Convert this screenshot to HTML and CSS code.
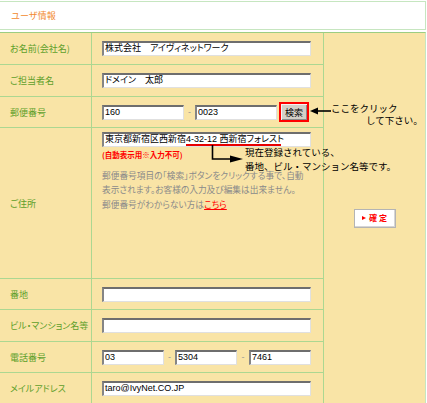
FILE: index.html
```html
<!DOCTYPE html>
<html lang="ja">
<head>
<meta charset="utf-8">
<title>ユーザ情報</title>
<link rel="stylesheet" href="styles.css">
</head>
<body>
<div class="page">
  <div class="head">ユーザ情報</div>
  <div class="form">
    <div class="lbl">お名前(会社名)</div>
    <div class="fld"><span class="inp w209">株式会社　アイヴィネットワーク</span></div>

    <div class="side"><span class="kakutei"><span class="tri"></span>確 定</span></div>

    <div class="lbl">ご担当者名</div>
    <div class="fld"><span class="inp w209">ドメイン　太郎</span></div>

    <div class="lbl">郵便番号</div>
    <div class="fld">
      <span class="inp w82">160</span><span class="dash">-</span><span class="inp w82">0023</span><span class="btn">検索</span>
    </div>

    <div class="lbl">ご住所</div>
    <div class="fld addr">
      <span class="inp w209 addr-inp">東京都新宿区西新宿4-32-12 西新宿フォレスト</span>
      <span class="note-red">(自動表示用※入力不可)</span>
      <p class="help">郵便番号項目の「検索」ボタンをクリックする事で、自動<br>表示されます。お客様の入力及び編集は出来ません。<br>郵便番号がわからない方は<a href="#">こちら</a></p>
    </div>

    <div class="lbl">番地</div>
    <div class="fld"><span class="inp w209"></span></div>

    <div class="lbl">ビル・マンション名等</div>
    <div class="fld"><span class="inp w209"></span></div>

    <div class="lbl">電話番号</div>
    <div class="fld">
      <span class="inp w62">03</span><span class="dash">-</span><span class="inp w62">5304</span><span class="dash d12">-</span><span class="inp w62">7461</span>
    </div>

    <div class="lbl">メイルアドレス</div>
    <div class="fld"><span class="inp w209">taro@IvyNet.CO.JP</span></div>

    <!-- annotations laid over the form -->
    <svg class="ann arrow-left" width="22" height="10" viewBox="0 0 22 10">
      <polygon points="0,5 8,1.5 8,8.5" fill="#000"/>
      <line x1="7" y1="5" x2="21" y2="5" stroke="#000" stroke-width="1.6"/>
    </svg>
    <div class="ann click-note">ここをクリック<br><span class="indent">して下さい。</span></div>

    <div class="ann red-line"></div>
    <svg class="ann bracket" width="34" height="20" viewBox="0 0 34 20">
      <polyline points="1.5,0 1.5,14 21,14" fill="none" stroke="#000" stroke-width="1.6"/>
      <polygon points="19,10.5 32,14 19,17.5" fill="#000"/>
    </svg>
    <div class="ann addr-note">現在登録されている、<br>番地、ビル・マンション名等です。</div>
  </div>
</div>
</body>
</html>
```
FILE: styles.css
```css
html, body {
  margin: 0;
  padding: 0;
  background: #fff;
}

body {
  font-family: "Noto Sans CJK JP", sans-serif;
  color: #000;
}

.page {
  width: 426px;
  padding-top: 1px;
}

.head {
  height: 27px;
  border: 1px solid #c6e6c0;
  border-left: none;
  margin-bottom: 2px;
  display: flex;
  align-items: center;
  padding-left: 11px;
  color: #f28a2e;
  font-size: 9px;
  line-height: 1;
}

.form {
  position: relative;
  display: grid;
  grid-template-columns: 91px 231px 101px;
  grid-template-rows: 31px 31px 30px 150px 30px 31px 30px 30px;
  gap: 1px;
  background: #acd791;
  border-top: 1px solid #9ccd82;
  border-right: 1px solid #c6e6c0;
}

.lbl {
  grid-column: 1;
  background: #f9e4a6;
  color: #5e9f2a;
  font-size: 9px;
  line-height: 1;
  display: flex;
  align-items: center;
  padding-left: 10px;
  font-feature-settings: "palt";
  white-space: nowrap;
}

.fld {
  grid-column: 2;
  background: #f9e4a6;
  display: flex;
  align-items: center;
  padding-left: 10px;
}

.side {
  grid-column: 3;
  grid-row: 1 / span 8;
  background: #f9e4a6;
  display: flex;
  align-items: center;
  justify-content: center;
}

.inp {
  display: block;
  box-sizing: border-box;
  height: 15px;
  background: #fff;
  border-style: solid;
  border-width: 2px 1px 1px 2px;
  border-color: #6e6e6e #e0e0e0 #e0e0e0 #858585;
  padding-left: 1px;
  font-family: "Liberation Sans", "Noto Sans CJK JP", sans-serif;
  font-size: 9px;
  line-height: 11px;
  white-space: nowrap;
  overflow: hidden;
  font-feature-settings: "palt";
  flex: none;
}

.w209 { width: 209px; }
.w82 { width: 82px; }
.w62 { width: 62px; }

.dash {
  width: 11px;
  text-align: center;
  color: #9a9a9a;
  font-family: "Liberation Sans", sans-serif;
  font-size: 9px;
  flex: none;
}

.dash.d12 { width: 12px; }

.btn {
  box-sizing: border-box;
  width: 30px;
  height: 20px;
  margin-left: 2px;
  border: 2px solid #f00;
  background: #d4d0c8;
  box-shadow: inset 1px 1px #f4f4f4, inset -1px -1px #8a8a8a;
  display: flex;
  align-items: center;
  justify-content: center;
  font-size: 9px;
  line-height: 1;
  flex: none;
}

.fld.addr {
  flex-direction: column;
  align-items: flex-start;
  justify-content: flex-start;
  padding-top: 4px;
}

.note-red {
  margin-top: 3px;
  color: #f00;
  font-size: 7.5px;
  line-height: 10px;
  font-weight: bold;
  white-space: nowrap;
}

.help {
  margin: 9px 0 0;
  color: #8a8a8a;
  font-size: 8.7px;
  line-height: 14.3px;
  font-feature-settings: "palt";
  white-space: nowrap;
}

.help a {
  color: #f00;
  text-decoration: underline;
}

.kakutei {
  box-sizing: border-box;
  width: 42px;
  height: 19px;
  background: #fff;
  border: 1px solid #b4b4b4;
  box-shadow: inset -1px -1px #d6d6d6;
  display: flex;
  align-items: center;
  justify-content: center;
  gap: 3px;
  color: #f00;
  font-size: 8px;
  font-weight: bold;
  line-height: 1;
  white-space: pre;
}

.tri {
  width: 0;
  height: 0;
  border-top: 2.5px solid transparent;
  border-bottom: 2.5px solid transparent;
  border-left: 4px solid #f00;
}

/* annotation overlays */
.ann {
  position: absolute;
}

.arrow-left {
  left: 310px;
  top: 73px;
}

.click-note {
  left: 331px;
  top: 69px;
  font-size: 9.5px;
  line-height: 12px;
  white-space: nowrap;
}

.click-note .indent {
  padding-left: 35px;
}

.red-line {
  left: 186px;
  top: 111px;
  width: 95px;
  height: 2px;
  background: #e80000;
}

.bracket {
  left: 211px;
  top: 112px;
}

.addr-note {
  left: 245px;
  top: 113px;
  font-size: 9.5px;
  line-height: 13.5px;
  white-space: nowrap;
}
```
